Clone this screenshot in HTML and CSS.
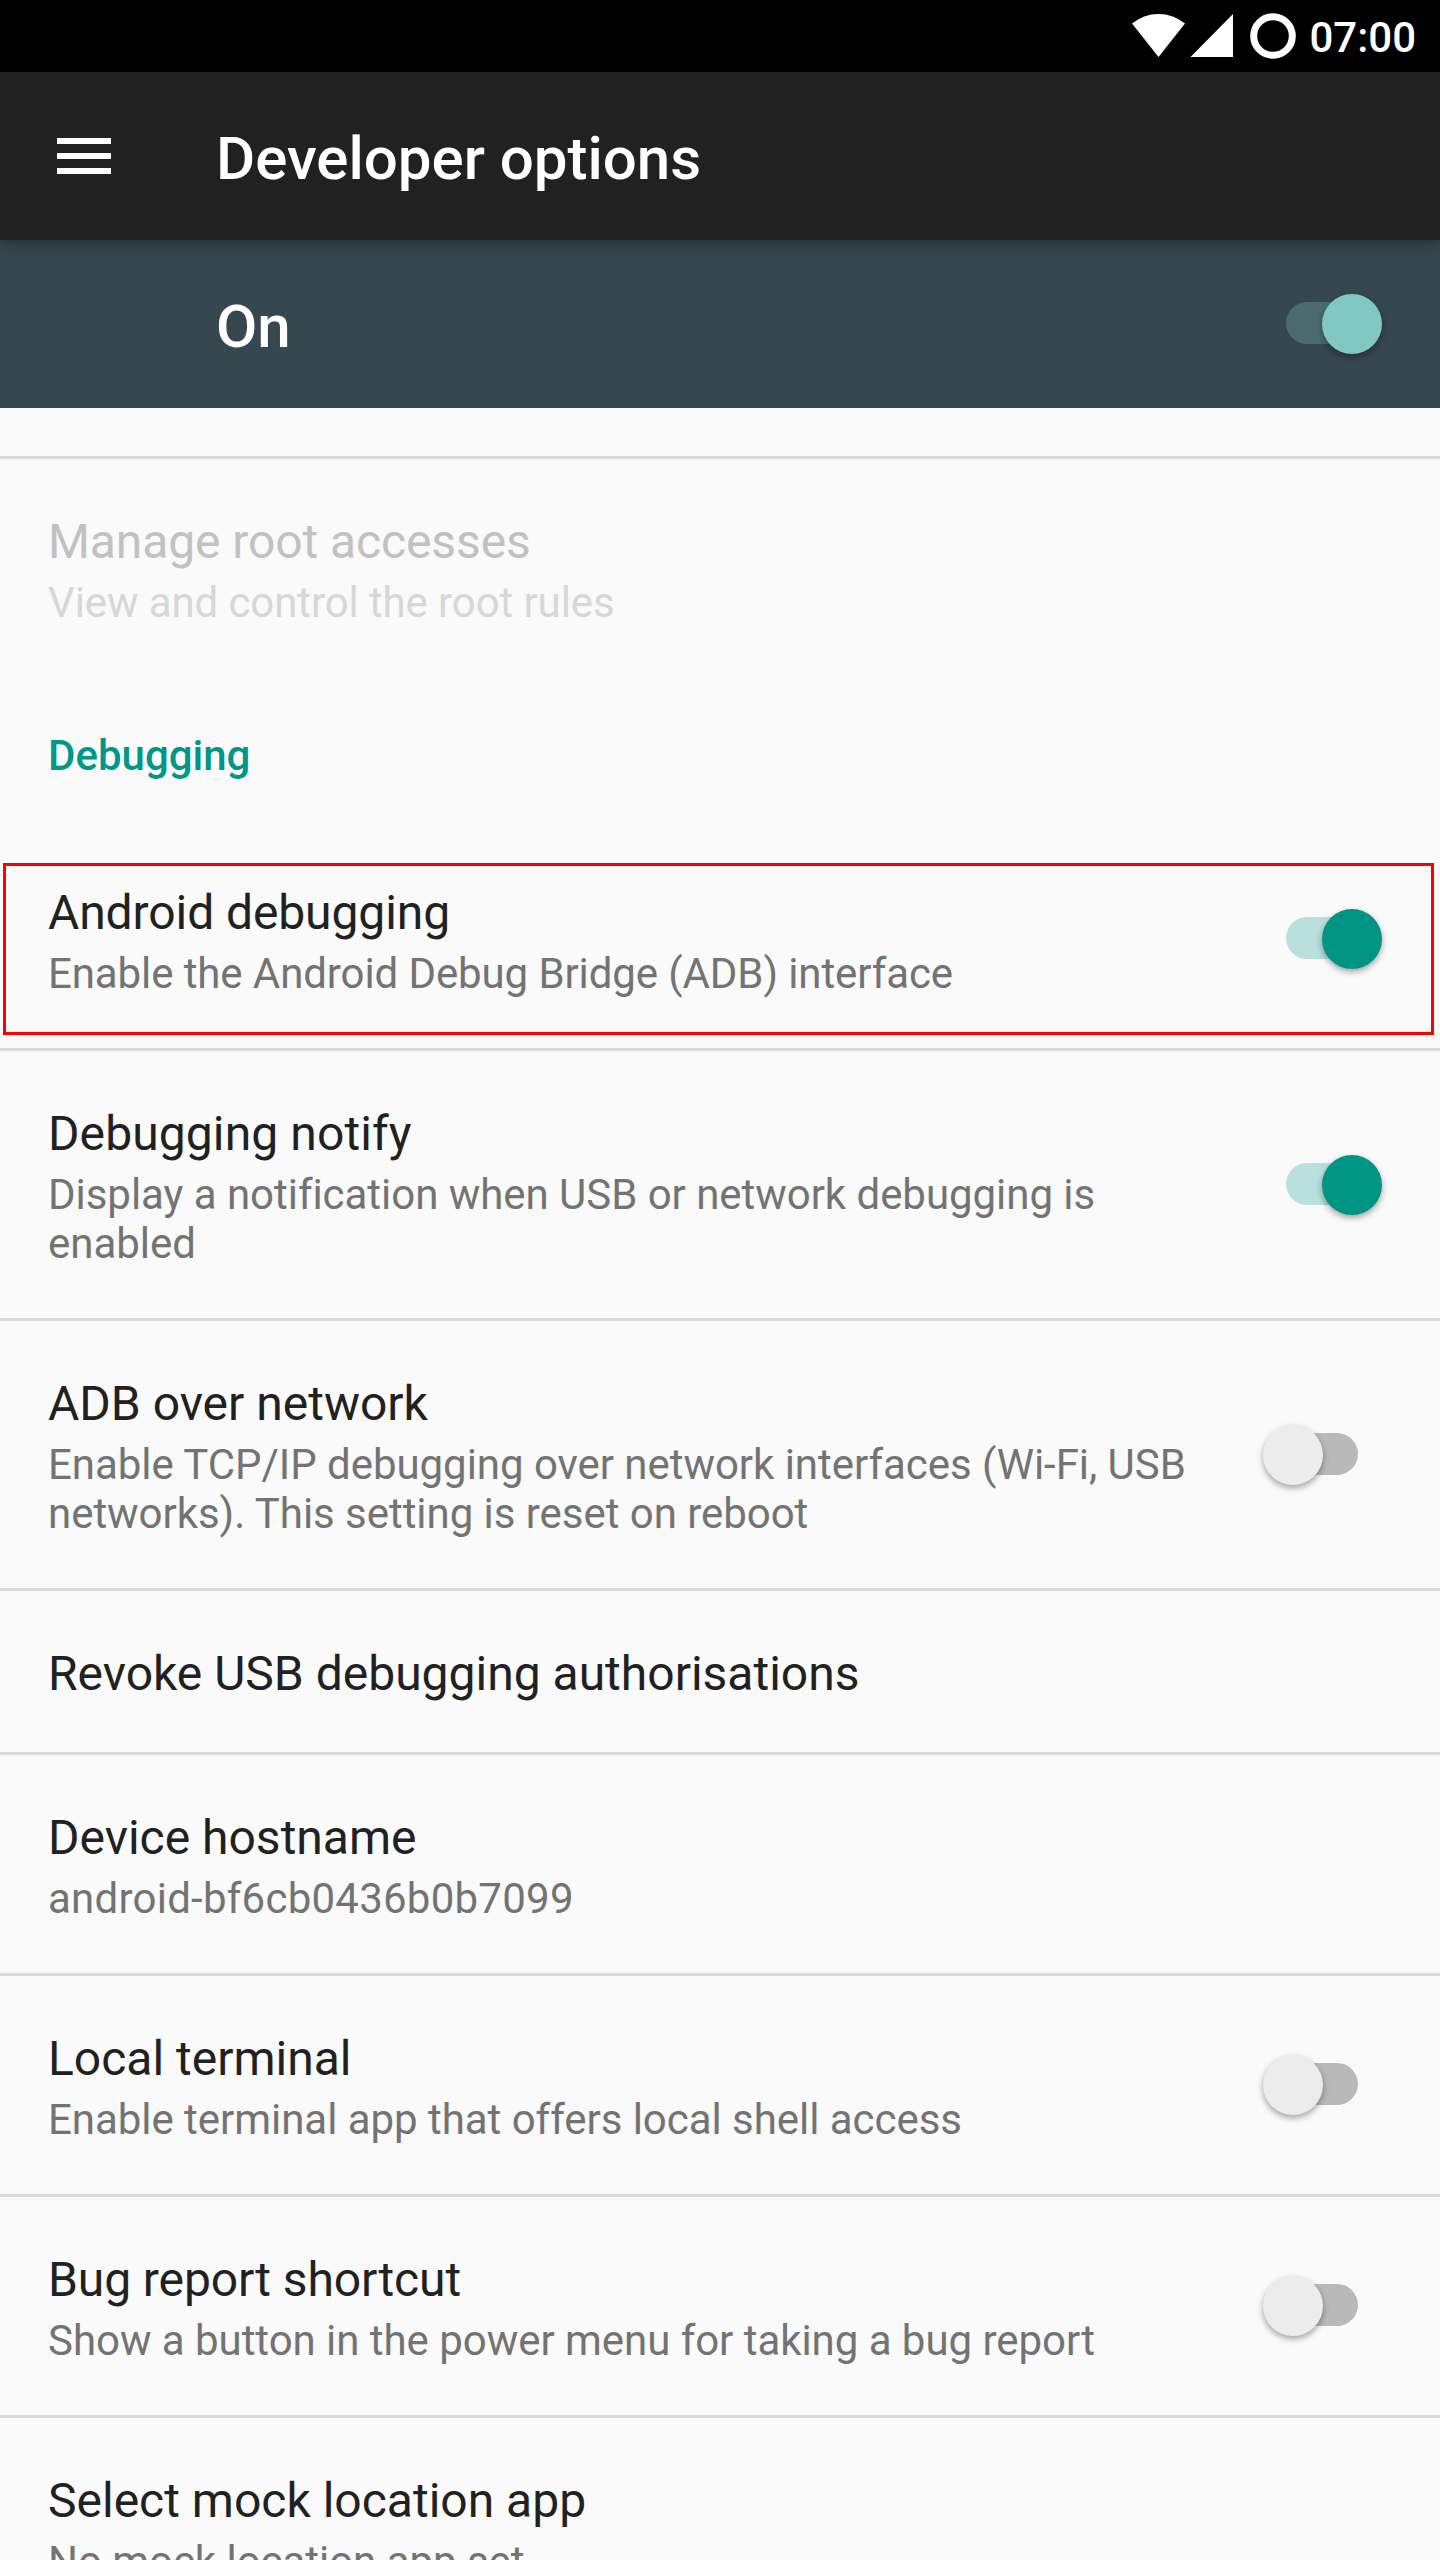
FILE: index.html
```html
<!DOCTYPE html>
<html lang="en">
<head>
<meta charset="utf-8">
<title>Developer options</title>
<link rel="stylesheet" href="styles.css">
</head>
<body>
<div class="screen">
  <div class="status-bar">
    <svg class="status-icons" width="166" height="72" viewBox="1132 0 166 72" fill="#fff">
      <path d="M1132 23.6Q1143.500 14 1158.500 14T1185 23.600L1158.500 57Z"/>
      <path d="M1233 14V57H1190.500Z"/>
      <circle cx="1273" cy="36" r="19.300" fill="none" stroke="#fff" stroke-width="7"/>
    </svg>
    <span class="clock">07:00</span>
  </div>
  <header class="toolbar">
    <svg class="menu-icon" width="54" height="36" viewBox="0 0 54 36" fill="#fff">
      <path d="M0 0h54v6H0zM0 15h54v6H0zM0 30h54v6H0z"/>
    </svg>
    <h1 class="toolbar-title">Developer options</h1>
  </header>
  <div class="master">
    <span class="master-label">On</span>
    <div class="switch switch-on switch-light"></div>
  </div>
  <main class="list">
    <div class="row-tail"></div>
    <section class="row disabled">
      <div class="text"><h2 class="title tight">Manage root accesses</h2><p class="summary tight">View and control the root rules</p></div>
    </section>
    <h3 class="category">Debugging</h3>
    <section class="row divided highlighted">
      <div class="text"><h2 class="title tight">Android debugging</h2><p class="summary tight">Enable the Android Debug Bridge (ADB) interface</p></div>
      <div class="switch switch-on"></div>
    </section>
    <section class="row divided tall">
      <div class="text"><h2 class="title loose">Debugging notify</h2><p class="summary snug">Display a notification when USB or network debugging is enabled</p></div>
      <div class="switch switch-on"></div>
    </section>
    <section class="row divided tall">
      <div class="text"><h2 class="title">ADB over network</h2><p class="summary snug">Enable TCP/IP debugging over network interfaces (Wi-Fi, USB networks). This setting is reset on reboot</p></div>
      <div class="switch"></div>
    </section>
    <section class="row divided short">
      <div class="text"><h2 class="title">Revoke USB debugging authorisations</h2></div>
    </section>
    <section class="row divided">
      <div class="text"><h2 class="title">Device hostname</h2><p class="summary hostname">android-bf6cb0436b0b7099</p></div>
    </section>
    <section class="row divided">
      <div class="text"><h2 class="title">Local terminal</h2><p class="summary snug">Enable terminal app that offers local shell access</p></div>
      <div class="switch"></div>
    </section>
    <section class="row divided">
      <div class="text"><h2 class="title tight">Bug report shortcut</h2><p class="summary snug">Show a button in the power menu for taking a bug report</p></div>
      <div class="switch"></div>
    </section>
    <section class="row">
      <div class="text"><h2 class="title">Select mock location app</h2><p class="summary snug">No mock location app set</p></div>
    </section>
  </main>
</div>
</body>
</html>
```
FILE: styles.css
```css
* { box-sizing: border-box; }

body {
  margin: 0;
  font-family: Roboto, sans-serif;
  background: #fafafa;
}

h1, h2, h3, p { margin: 0; }

.screen {
  width: 1440px;
  height: 2560px;
  overflow: hidden;
}

.status-bar {
  display: flex;
  justify-content: flex-end;
  gap: 11px;
  height: 72px;
  padding-right: 24px;
  background: #000;
  color: #fff;
}

.clock {
  padding-top: 13px;
  font-size: 42px;
  font-weight: 500;
  line-height: 49px;
}

.toolbar {
  position: relative;
  z-index: 1;
  display: flex;
  gap: 105px;
  height: 168px;
  padding-left: 57px;
  background: #212121;
  color: #fff;
  box-shadow: 0 4px 12px rgba(0, 0, 0, 0.35);
}

.menu-icon { margin-top: 66px; }

.toolbar-title,
.master-label {
  padding-top: 51px;
  font-size: 60px;
  font-weight: 500;
  line-height: 71px;
}

.master {
  display: flex;
  justify-content: space-between;
  height: 168px;
  padding: 0 58px 0 216px;
  background: #37474f;
  color: #fff;
}

.master .switch { margin-top: 53px; }

.row-tail {
  height: 51px;
  border-bottom: 3px solid #dadada;
}

.row {
  position: relative;
  display: flex;
  justify-content: space-between;
  align-items: center;
  height: 218px;
  padding: 0 58px 0 48px;
}

.row.divided {
  height: 221px;
  border-bottom: 3px solid #dadada;
}

.row.tall { height: 270px; }
.row.short { height: 164px; }

.text {
  align-self: flex-start;
  width: 1170px;
  padding-top: 50px;
}

.title {
  font-size: 48px;
  font-weight: 400;
  line-height: 65px;
  color: #212121;
}

.summary {
  margin-top: 4px;
  font-size: 42px;
  line-height: 49px;
  color: #737373;
}

.tight { letter-spacing: -0.1px; }
.snug { letter-spacing: -0.04px; }
.loose { letter-spacing: 0.1px; }
.hostname { letter-spacing: 0.24px; }

.disabled .title { color: #c1c1c1; }
.disabled .summary { color: #d7d7d7; }

.category {
  height: 153px;
  padding: 54px 48px 0;
  font-size: 42px;
  font-weight: 500;
  line-height: 49px;
  color: #009688;
}

.highlighted::after {
  content: "";
  position: absolute;
  inset: 33px 6px 13px 3px;
  border: 3px solid #f00;
}

.switch {
  position: relative;
  flex: none;
  width: 120px;
  height: 61px;
  margin-bottom: 1px;
}

.tall .switch { margin-bottom: 0; }

.switch::before,
.switch::after {
  content: "";
  position: absolute;
}

.switch::before {
  top: 9px;
  left: 9px;
  width: 87px;
  height: 42px;
  border-radius: 21px;
  background: #b9b9b9;
}

.switch::after {
  top: 0.5px;
  left: 0.5px;
  width: 60px;
  height: 60px;
  border-radius: 50%;
  background: #ececec;
  box-shadow: 0 3px 6px rgba(0, 0, 0, 0.35);
}

.switch-on::before { left: 24px; background: #b9e0dc; }
.switch-on::after { left: 59.5px; background: #009485; }

.switch-light::before { background: #4c6b6e; }
.switch-light::after { background: #80c8c1; }
```
